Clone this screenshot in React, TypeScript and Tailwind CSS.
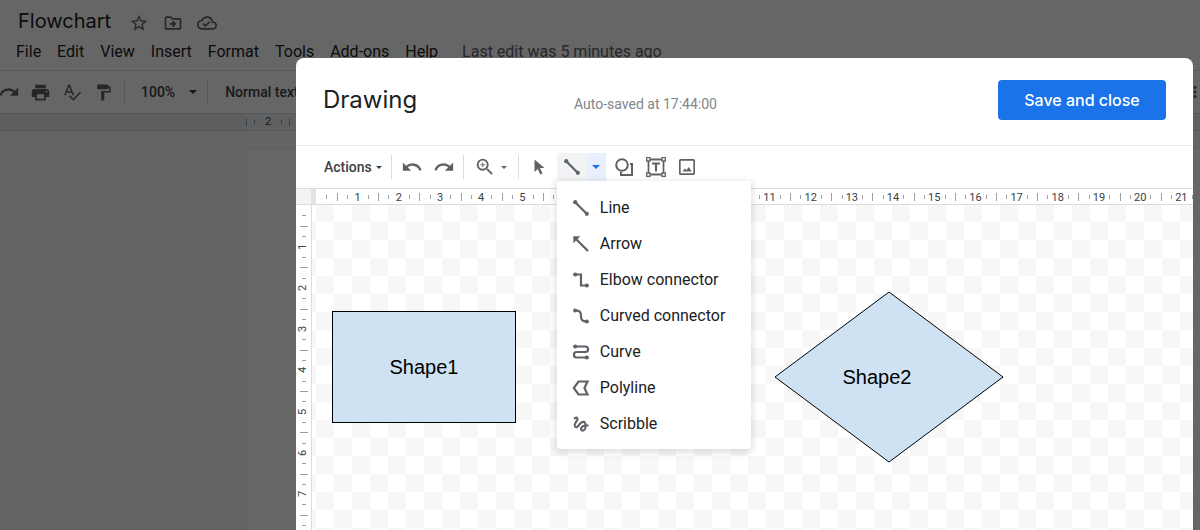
import React from 'react';
import {
  MdStarBorder,
  MdOutlineDriveFileMove,
  MdOutlineCloudDone,
  MdPrint,
  MdSpellcheck,
  MdFormatPaint,
  MdMoreVert,
  MdUndo,
  MdRedo,
  MdZoomIn,
} from 'react-icons/md';

const menus = ['File', 'Edit', 'View', 'Insert', 'Format', 'Tools', 'Add-ons', 'Help'];

type IconName = 'line' | 'arrow' | 'elbow' | 'curvedConnector' | 'curve' | 'polyline' | 'scribble';

const lineTypes: { icon: IconName; label: string }[] = [
  { icon: 'line', label: 'Line' },
  { icon: 'arrow', label: 'Arrow' },
  { icon: 'elbow', label: 'Elbow connector' },
  { icon: 'curvedConnector', label: 'Curved connector' },
  { icon: 'curve', label: 'Curve' },
  { icon: 'polyline', label: 'Polyline' },
  { icon: 'scribble', label: 'Scribble' },
];

function EndDots({ y = 2.5 }: { y?: number }) {
  return (
    <g fill="currentColor" stroke="none">
      <circle cx="2.2" cy={y} r="2.1" />
      <circle cx="13.8" cy={16 - y} r="2.1" />
    </g>
  );
}

const linePaths: Record<IconName, React.ReactNode> = {
  line: (
    <>
      <path d="M2 2l12 12" />
      <EndDots y={2.2} />
    </>
  ),
  arrow: (
    <>
      <path d="M3 3l12 12" />
      <path d="M0.3 0.3h7l-7 7z" fill="currentColor" stroke="none" />
    </>
  ),
  elbow: (
    <>
      <path d="M2 2.5h6v11h6" />
      <EndDots />
    </>
  ),
  curvedConnector: (
    <>
      <path d="M2 2.5c4.500 0 6 1 6 5.500s1.500 5.500 6 5.500" />
      <EndDots />
    </>
  ),
  curve: (
    <>
      <path d="M2 2.5h10.300a2.700 2.700 0 0 1 0 5.500H3.700a2.700 2.700 0 0 0 0 5.500h10.300" />
      <EndDots />
    </>
  ),
  polyline: <path d="M5.500 1.500h9L11.500 8l3 6.500h-9L0.800 8z" />,
  scribble: (
    <path
      transform="translate(-2 -2) scale(.84)"
      fill="currentColor"
      stroke="none"
      d="M4.590 6.890c.7-.71 1.400-1.350 1.710-1.220.5.2 0 1.030-.3 1.520-.25.42-2.860 3.890-2.860 6.310 0 1.280.48 2.340 1.340 2.980.75.56 1.740.73 2.640.46 1.070-.31 1.950-1.400 3.060-2.770 1.210-1.490 2.830-3.440 4.080-3.440 1.630 0 1.650 1.010 1.760 1.790-3.780.64-5.380 3.670-5.380 5.370 0 1.700 1.440 3.090 3.210 3.090 1.630 0 4.290-1.330 4.690-6.100H21v-2.500h-2.470c-.15-1.650-1.090-4.200-4.030-4.200-2.250 0-4.180 1.910-4.940 2.840-.58.73-2.060 2.480-2.290 2.720-.25.3-.68.84-1.110.84-.45 0-.72-.83-.36-1.920.35-1.090 1.400-2.860 1.850-3.520.78-1.140 1.300-1.920 1.300-3.280C8.950 3.690 7.310 3 6.440 3 5.120 3 3.970 4 3.720 4.250c-.36.36-.66.66-.88.93l1.750 1.710zm9.290 11.660c-.31 0-.74-.26-.74-.72 0-.6.73-2.200 2.870-2.760-.3 2.690-1.430 3.480-2.130 3.480z"
    />
  ),
};

function LineIcon({ name }: { name: IconName }) {
  return (
    <svg viewBox="0 0 16 16" fill="none" stroke="currentColor" strokeWidth="2.2" className="w-4 h-4 shrink-0 overflow-visible">
      {linePaths[name]}
    </svg>
  );
}

function Caret({ small = false }: { small?: boolean }) {
  return (
    <svg viewBox="0 0 8 4" className={small ? 'w-[6px] h-[3px] shrink-0' : 'w-2 h-1 shrink-0'}>
      <path d="M0 0h8L4 4z" fill="currentColor" />
    </svg>
  );
}

function Separator() {
  return <div className="w-px h-6 bg-[#dadce0] shrink-0" />;
}

function ShapesIcon() {
  return (
    <svg viewBox="0 0 18 18" fill="none" stroke="currentColor" strokeWidth="2" className="w-[18px] h-[18px]">
      <circle cx="7" cy="7" r="5.800" />
      <path d="M15 6h2v11H6v-3" />
    </svg>
  );
}

function TextBoxIcon() {
  return (
    <svg viewBox="0 0 20 20" fill="none" stroke="currentColor" className="w-5 h-5">
      <path d="M2.500 2.500h15v15h-15z" strokeWidth="1.800" />
      <path d="M6 6.500h8M10 6.500v8" strokeWidth="2.200" />
      <g fill="white" strokeWidth="1.300">
        <path d="M.7 .7h3.300v3.300H.7zM16 .7h3.300v3.300H16zM.7 16h3.300v3.300H.7zM16 16h3.300v3.300H16z" />
      </g>
    </svg>
  );
}

function ImageIcon() {
  return (
    <svg viewBox="0 0 16 16" className="w-4 h-4">
      <rect x=".8" y=".8" width="14.400" height="14.400" rx="1" fill="none" stroke="currentColor" strokeWidth="1.700" />
      <path d="M3.500 12.500l2.300-3 1.700 1.800 2.300-3.300 3 4.500z" fill="currentColor" />
    </svg>
  );
}

function HorizontalRuler() {
  return (
    <div className="flex flex-1 min-w-0 overflow-hidden items-center text-[11px] leading-none text-[#3c4043]">
      <div className="w-[21px] shrink-0 flex justify-center">
        <div className="w-px h-1 bg-[#9aa0a6]" />
      </div>
      <div className="w-[865px] shrink-0 flex">
        {Array.from({ length: 21 }, (_, i) => (
          <div key={i} className="flex-1 grid grid-cols-4 items-center">
            <div className="w-px h-2 bg-[#9aa0a6]" />
            <div className="w-px h-1 bg-[#9aa0a6]" />
            <span className="w-0 pt-px flex justify-center">{i + 1}</span>
            <div className="w-px h-1 bg-[#9aa0a6]" />
          </div>
        ))}
      </div>
    </div>
  );
}

function VerticalRuler() {
  return (
    <div className="w-4 shrink-0 overflow-hidden flex flex-col items-center border-r border-[#dadce0] bg-white text-[11px] text-[#3c4043]">
      <div className="h-[21px] shrink-0 flex items-center">
        <div className="w-1 h-px bg-[#9aa0a6]" />
      </div>
      <div className="h-[330px] shrink-0 flex flex-col">
        {Array.from({ length: 8 }, (_, i) => (
          <div key={i} className="flex-1 grid grid-rows-4 justify-items-center">
            <div className="w-2 h-px bg-[#9aa0a6]" />
            <div className="w-1 h-px bg-[#9aa0a6]" />
            <span className="h-0 flex items-center -rotate-90">{i < 7 && i + 1}</span>
            <div className="w-1 h-px bg-[#9aa0a6]" />
          </div>
        ))}
      </div>
    </div>
  );
}

function DocsPage() {
  return (
    <div className="h-full flex flex-col bg-white text-[#202124]">
      <header className="h-[71px] shrink-0 border-b border-[#dadce0] whitespace-nowrap">
        <div className="h-[41px] pl-[18px] flex items-center gap-[18px]">
          <h1 className="font-['Inter',sans-serif] text-xl">Flowchart</h1>
          <div className="flex items-center gap-[14px] pt-1 text-[#5f6368]">
            <button aria-label="Star"><MdStarBorder size={20} /></button>
            <button aria-label="Move"><MdOutlineDriveFileMove size={20} /></button>
            <button aria-label="Document status"><MdOutlineCloudDone size={20} /></button>
          </div>
        </div>
        <nav className="pl-4 h-[22px] flex items-center gap-4 text-base">
          {menus.map((m) => (
            <button key={m}>{m}</button>
          ))}
          <a href="#history" className="ml-2 text-[#5f6368]">Last edit was 5 minutes ago</a>
        </nav>
      </header>

      <div className="h-[43px] shrink-0 flex items-center text-sm font-medium text-[#5f6368] border-b border-[#dadce0] whitespace-nowrap">
        <button aria-label="Redo" className="-ml-[2px]"><MdRedo size={22} /></button>
        <button aria-label="Print" className="ml-[10px]"><MdPrint size={21} /></button>
        <button aria-label="Spelling" className="ml-[11px]"><MdSpellcheck size={20} /></button>
        <button aria-label="Paint format" className="ml-3"><MdFormatPaint size={19} /></button>
        <div className="ml-[11px]"><Separator /></div>
        <button className="ml-4 flex items-center gap-[14px] text-[#3c4043]">
          100% <Caret />
        </button>
        <div className="ml-[10px]"><Separator /></div>
        <button className="ml-[17px] text-[#3c4043]">Normal text</button>
        <button aria-label="More" className="ml-auto -mr-1"><MdMoreVert size={18} /></button>
      </div>

      <div className="h-[17px] shrink-0 flex bg-[#f1f3f4] border-b border-[#dadce0] text-[11px] text-[#3c4043]">
        <div className="w-[246px] shrink-0 bg-[#e8eaed]" />
        <div className="w-11 flex items-center justify-between">
          <div className="w-px h-2 bg-[#9aa0a6]" />
          <div className="w-px h-1 bg-[#9aa0a6]" />
          <span className="w-3 text-center">2</span>
          <div className="w-px h-1 bg-[#9aa0a6]" />
          <div className="w-px h-2 bg-[#9aa0a6]" />
        </div>
      </div>

      <div className="flex-1 min-h-0 bg-[#f8f9fa] pt-[17px] pl-[246px]">
        <div className="h-full bg-white border-l border-t border-[#e8eaed]" />
      </div>
    </div>
  );
}

function LineMenu() {
  return (
    <div
      role="menu"
      className="absolute left-0 top-full z-10 w-[194px] pt-[9px] pb-[7px] bg-white rounded-b-sm shadow-[0_2px_6px_2px_rgba(60,64,67,0.15)]"
    >
      {lineTypes.map((t) => (
        <button
          key={t.label}
          role="menuitem"
          className="w-full h-9 pl-4 flex items-center gap-[11px] text-base text-[#202124] whitespace-nowrap"
        >
          <span className="text-[#5f6368]"><LineIcon name={t.icon} /></span>
          {t.label}
        </button>
      ))}
    </div>
  );
}

function DrawingToolbar() {
  return (
    <div className="h-[42px] shrink-0 pl-7 flex items-center text-[#5f6368]">
      <button className="flex items-center gap-1 text-sm font-medium text-[#3c4043]">
        Actions <Caret small />
      </button>
      <div className="ml-[9px]"><Separator /></div>
      <button aria-label="Undo" className="ml-[9px]"><MdUndo size={22} /></button>
      <button aria-label="Redo" className="ml-[10px]"><MdRedo size={22} /></button>
      <div className="ml-2"><Separator /></div>
      <button aria-label="Zoom" className="ml-[10px] flex items-center gap-[5px]">
        <MdZoomIn size={22} />
        <Caret small />
      </button>
      <div className="ml-[11px]"><Separator /></div>
      <button aria-label="Select" className="ml-[15px]">
        <svg viewBox="0 0 11 16" className="w-[11px] h-4">
          <path d="M.5 .5v12.500l3.300-3 2.500 5.500 2.200-1L6 9h4.500z" fill="currentColor" />
        </svg>
      </button>
      <div className="relative ml-3 h-7 flex">
        <button aria-label="Line" className="w-[30px] flex items-center justify-center bg-[#f1f3f4]">
          <LineIcon name="line" />
        </button>
        <button aria-label="Select line" className="w-[19px] flex items-center justify-center bg-[#e8f0fe] text-[#1a73e8]">
          <Caret />
        </button>
        <LineMenu />
      </div>
      <button aria-label="Shape" className="ml-[9px]"><ShapesIcon /></button>
      <button aria-label="Text box" className="ml-[13px]"><TextBoxIcon /></button>
      <button aria-label="Image" className="ml-[13px]"><ImageIcon /></button>
    </div>
  );
}

function Canvas() {
  return (
    <div className="relative flex-1 overflow-hidden bg-white bg-[conic-gradient(#f7f7f7_25%,#ffffff_0_50%,#f7f7f7_0_75%,#ffffff_0)] bg-[length:36px_36px] bg-[position:4px_17px] font-['Liberation_Sans',Arial,sans-serif] text-xl text-black">
      <div className="absolute left-5 top-[106px] w-[184px] h-[112px] flex items-center justify-center bg-[#cfe2f3] border border-black">
        Shape1
      </div>
      <div className="absolute left-[462px] top-[86px] w-[230px] h-[172px]">
        <svg viewBox="0 0 230 172" className="w-full h-full">
          <path d="M115 1l114 85-114 85L1 86z" fill="#cfe2f3" stroke="#000000" />
        </svg>
        <span className="absolute inset-0 pr-6 flex items-center justify-center">Shape2</span>
      </div>
    </div>
  );
}

function DrawingDialog() {
  return (
    <div
      role="dialog"
      aria-label="Drawing"
      className="flex-1 min-w-0 flex flex-col bg-white rounded-t-lg overflow-hidden"
    >
      <div className="h-[88px] shrink-0 flex items-center pl-[27px] pr-[27px] pb-1 border-b border-[#e8eaed]">
        <h2 className="w-[251px] font-['Inter',sans-serif] text-2xl text-[#202124]">Drawing</h2>
        <p className="pt-2 text-sm text-[#80868b]">Auto-saved at 17:44:00</p>
        <button className="ml-auto h-10 w-[168px] rounded bg-[#1a73e8] font-['Inter',sans-serif] text-base font-medium text-white">
          Save and close
        </button>
      </div>

      <DrawingToolbar />

      <div className="h-[17px] shrink-0 flex border-y border-[#dadce0]">
        <div className="w-[15px] shrink-0 bg-[#f1f3f4]" />
        <div className="w-[5px] shrink-0 bg-[#e1e3e6]" />
        <HorizontalRuler />
      </div>
      <div className="flex-1 min-h-0 flex">
        <VerticalRuler />
        <Canvas />
      </div>
    </div>
  );
}

export default function App() {
  return (
    <div className="relative h-screen overflow-hidden font-['Roboto',sans-serif]">
      <DocsPage />
      <div className="absolute inset-0 flex bg-black/60 pt-[58px] pl-[296px] pr-[7px]">
        <DrawingDialog />
      </div>
    </div>
  );
}
